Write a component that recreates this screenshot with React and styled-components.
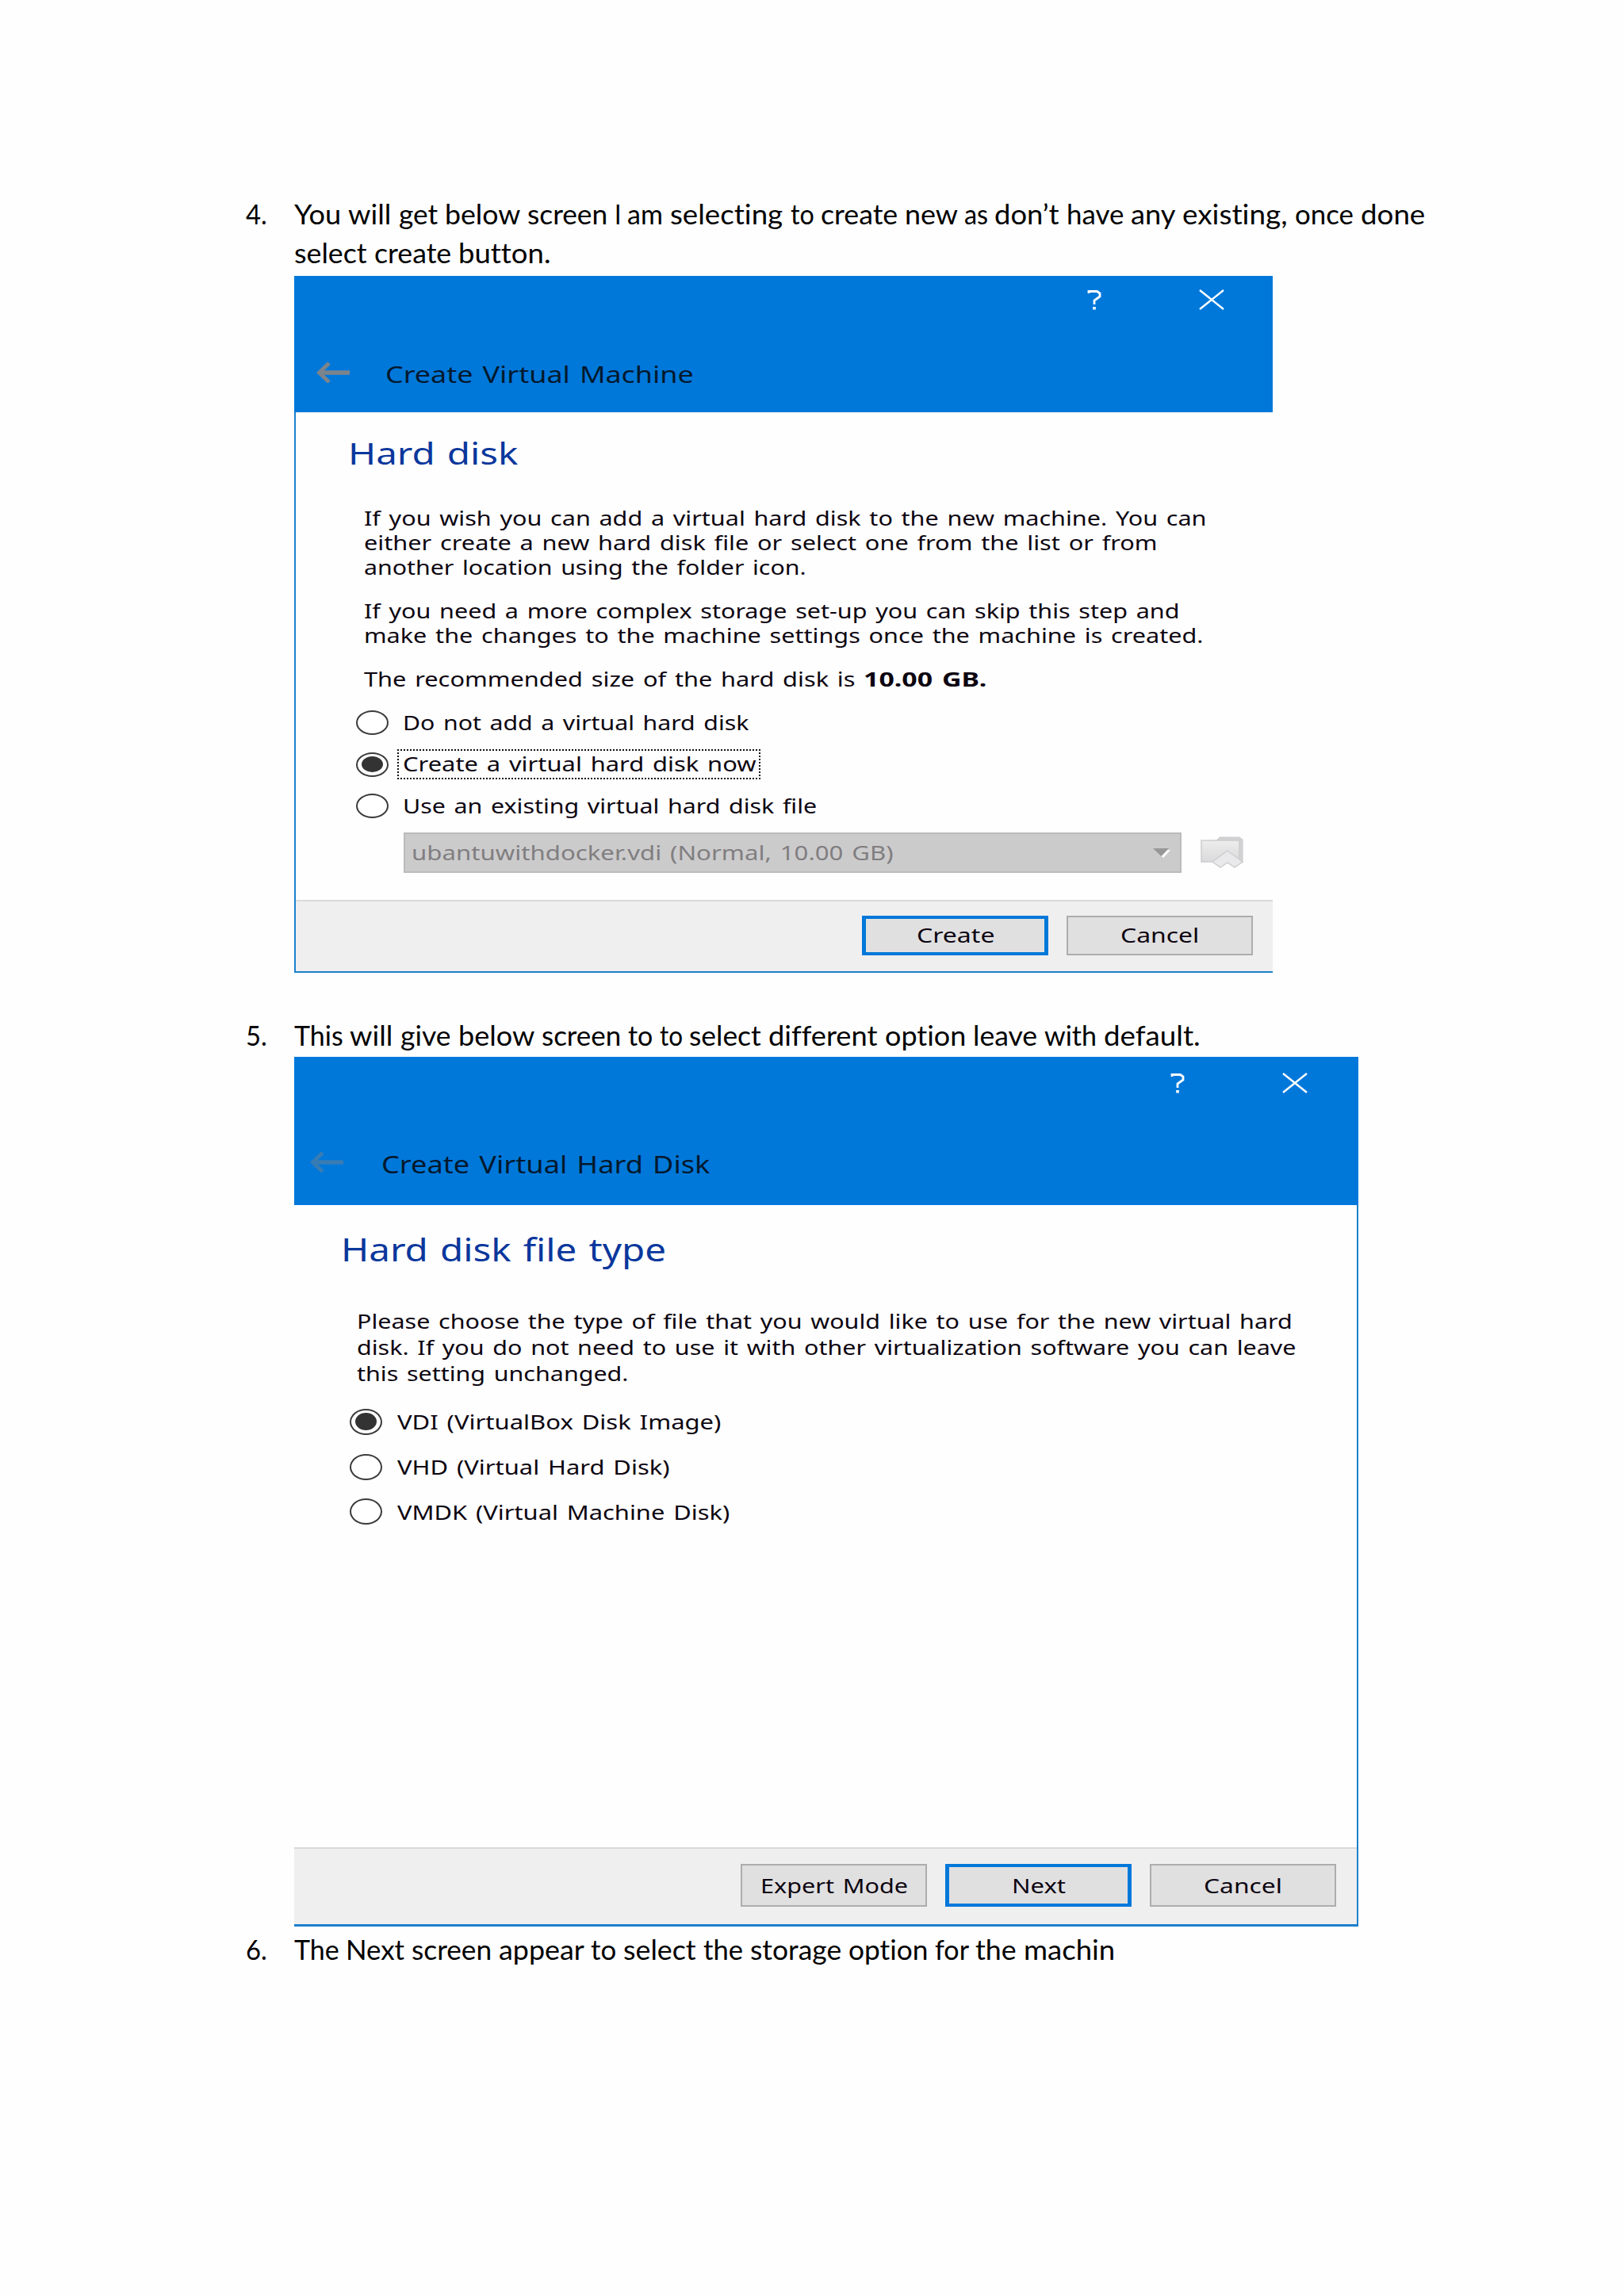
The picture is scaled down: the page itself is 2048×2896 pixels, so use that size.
import { useLayoutEffect, useRef, useState } from "react";
import styled, { createGlobalStyle } from "styled-components";

const GlobalStyle = createGlobalStyle`
  body {
    margin: 0;
    background: #fefefe;
  }
  * {
    box-sizing: border-box;
  }
`;

const Page = styled.ol`
  width: 2048px;
  height: 2896px;
  margin: 0;
  padding: 245px 0 0 310px;
  list-style: none;
  overflow: hidden;
  color: #000;
  font-family: Lato, Carlito, sans-serif;
  font-size: 34px;
  line-height: 49px;
  font-variant-ligatures: none;
`;

const Step = styled.li`
  display: grid;
  grid-template-columns: 61px 1fr;
  height: ${(p) => p.$height}px;
`;

const StepLine = styled.div`
  height: 49px;
  display: flex;
`;

const Dialog = styled.section`
  width: ${(p) => p.$width}px;
  margin-top: ${(p) => p.$top}px;
  background: #fefefe;
  border: 0 solid #1c80cc;
  border-width: ${(p) => p.$border};
  color: #0c0510;
  font-family: "Noto Sans", sans-serif;
  font-size: ${(p) => p.$size}px;
  word-spacing: 0.09em;
`;

const Header = styled.header`
  height: ${(p) => p.$height}px;
  margin: ${(p) => p.$margin};
  background: #0078da;
`;

const Controls = styled.div`
  height: ${(p) => p.$height}px;
  padding-right: ${(p) => p.$right}px;
  display: flex;
  justify-content: flex-end;
  align-items: center;
  gap: 123px;
  color: #fff;
`;

const TitleRow = styled.div`
  height: 40px;
  margin-top: ${(p) => p.$top}px;
  padding-left: ${(p) => p.$left}px;
  display: flex;
  align-items: center;
  gap: ${(p) => p.$gap}px;
`;

const Title = styled.div`
  padding-top: 3px;
  color: #04192e;
  font-size: ${(p) => p.$size}px;
  line-height: 40px;
`;

const Body = styled.div`
  height: ${(p) => p.$height}px;
  padding: ${(p) => p.$padding};
`;

const Heading = styled.h1`
  margin: 0;
  color: #0a379c;
  font-size: ${(p) => p.$size}px;
  line-height: ${(p) => p.$line}px;
  height: ${(p) => p.$line}px;
  font-weight: 400;
`;

const Paragraph = styled.div`
  margin: ${(p) => p.$top}px 0 0 ${(p) => p.$left}px;
  line-height: ${(p) => p.$line}px;
`;

const TextLine = styled.div`
  display: flex;
  height: ${(p) => p.$line}px;
`;

const RadioGroup = styled.div`
  margin: ${(p) => p.$top}px 0 0 ${(p) => p.$left}px;
  display: flex;
  flex-direction: column;
  gap: ${(p) => p.$gap}px;
`;

const RadioRow = styled.div`
  height: 38px;
  display: flex;
  align-items: center;
  line-height: 38px;
`;

const Radio = styled.span`
  width: 41px;
  height: ${(p) => p.$height}px;
  border: 2px solid #3b3b3d;
  border-radius: 50%;
  background: #fff;
  display: flex;
  align-items: center;
  justify-content: center;
`;

const Dot = styled.span`
  width: 27px;
  height: ${(p) => p.$height}px;
  border-radius: 50%;
  background: #333;
`;

const RadioLabel = styled.span`
  height: 38px;
  margin-left: ${(p) => p.$gap - 7}px;
  padding: 0 6px 0 7px;
  display: flex;
  outline: ${(p) => (p.$focused ? "2px dotted #111" : "none")};
  outline-offset: -2px;
`;

const DiskRow = styled.div`
  margin: 14px 0 0 70px;
  display: flex;
  align-items: center;
`;

const Select = styled.div`
  width: 981px;
  height: 51px;
  padding: 0 12px 0 8px;
  background: #cccbcc;
  border: 2px solid #bbb;
  color: #807e80;
  line-height: 47px;
  display: flex;
  justify-content: space-between;
  align-items: center;
`;

const FolderButton = styled.span`
  margin-left: 24px;
  display: flex;
`;

const Footer = styled.footer`
  height: ${(p) => p.$height}px;
  padding: ${(p) => p.$padding};
  background: #f0eff0;
  border-top: 2px solid #d9d9d9;
  display: flex;
  justify-content: flex-end;
  gap: 23px;
`;

const Button = styled.div`
  width: 235px;
  height: ${(p) => p.$height}px;
  background: #e1e0e1;
  border: solid ${(p) => (p.$primary ? "#0078d9" : "#adadad")};
  border-width: ${(p) => (p.$primary ? "4px 5px" : "2px")};
  display: flex;
  align-items: center;
  justify-content: center;
  line-height: 36px;
`;

const FitBox = styled.span`
  display: inline-block;
  width: ${(p) => p.$width}px;
  flex: none;
  white-space: pre;
`;

const FitInner = styled.span`
  display: inline-block;
  transform-origin: 0 50%;
`;

// stretches or condenses one run of text so it fills the given width
const Fit = ({ width, children }) => {
  const ref = useRef(null);
  const [scale, setScale] = useState(1);
  useLayoutEffect(() => {
    setScale(width / ref.current.offsetWidth);
  }, [width]);
  return (
    <FitBox $width={width}>
      <FitInner ref={ref} style={{ transform: `scaleX(${scale})` }}>
        {children}
      </FitInner>
    </FitBox>
  );
};

// one line of the document, spaced word by word
const Sentence = ({ words }) => (
  <StepLine>
    {words.map(([word, width], i) => (
      <Fit key={i} width={width}>
        {i < words.length - 1 ? `${word} ` : word}
      </Fit>
    ))}
  </StepLine>
);

const BackArrow = ({ color }) => (
  <svg width="42" height="26" viewBox="0 0 42 26" fill="none" stroke={color}>
    <path d="M3 13H42" strokeWidth="5.5" />
    <path d="M16 1L3.500 13L16 25" strokeWidth="5" />
  </svg>
);

const CloseIcon = () => (
  <svg width="32" height="26" viewBox="0 0 32 26" fill="none" stroke="currentColor" strokeWidth="2.4">
    <path d="M1 1L31 25M31 1L1 25" />
  </svg>
);

const HelpIcon = () => (
  <svg width="18" height="26" viewBox="0 0 18 26" fill="none" stroke="currentColor" strokeWidth="2.8">
    <path d="M2 5V2.5H12.5L16 5V9L9 14V19" />
    <path d="M9 22V25.5" strokeWidth="3.6" />
  </svg>
);

const SelectArrow = () => (
  <svg width="22" height="13" viewBox="0 0 22 13">
    <path d="M22 3L13 13L10 10L18 3Z" fill="#fff" />
    <path d="M0 1H20L10.500 11Z" fill="#989798" />
  </svg>
);

const FolderIcon = () => (
  <svg width="54" height="40" viewBox="0 0 54 40">
    <defs>
      <linearGradient id="folder" x1="0" y1="0" x2="0" y2="1">
        <stop offset="0" stopColor="#ededed" />
        <stop offset="1" stopColor="#dadadc" />
      </linearGradient>
    </defs>
    <path d="M20 5L24 1H49L53 4V33H20Z" fill="#d2d1d3" stroke="#cbcbcd" />
    <path d="M1 5H49V32H1Z" fill="url(#folder)" stroke="#cdcdcf" strokeWidth="1.500" />
    <path d="M34 18L53 32L43 39L34 33L25 39L15 32Z" fill="#e9e8ea" stroke="#cfced0" strokeWidth="1.500" />
  </svg>
);

const Lines = ({ lines, line }) =>
  lines.map(([text, width]) => (
    <TextLine key={text} $line={line}>
      <Fit width={width}>{text}</Fit>
    </TextLine>
  ));

const Option = ({ text, width, checked, focused, height, gap }) => (
  <RadioRow>
    <Radio $height={height}>{checked && <Dot $height={height - 11} />}</Radio>
    <RadioLabel $focused={focused} $gap={gap}>
      <Fit width={width}>{text}</Fit>
    </RadioLabel>
  </RadioRow>
);

const MachineDialog = () => (
  <Dialog $width={1234} $top={5} $border="0 0 2px 2px" $size={24.5}>
    <Header $height={172} $margin="0 0 0 -2px">
      <Controls $height={60} $right={61}>
        <HelpIcon />
        <CloseIcon />
      </Controls>
      <TitleRow $top={42} $left={28} $gap={45}>
        <BackArrow color="#7c848b" />
        <Title $size={29}>
          <Fit width={389}>Create Virtual Machine</Fit>
        </Title>
      </TitleRow>
    </Header>
    <Body $height={615} $padding="26px 0 0 66px">
      <Heading $size={38} $line={50}>
        <Fit width={215}>Hard disk</Fit>
      </Heading>
      <Paragraph $top={42} $left={20} $line={31.2}>
        <Lines
          line={31.2}
          lines={[
            ["If you wish you can add a virtual hard disk to the new machine. You can", 1063],
            ["either create a new hard disk file or select one from the list or from", 1000],
            ["another location using the folder icon.", 558],
          ]}
        />
      </Paragraph>
      <Paragraph $top={23.2} $left={20} $line={31.2}>
        <Lines
          line={31.2}
          lines={[
            ["If you need a more complex storage set-up you can skip this step and", 1029],
            ["make the changes to the machine settings once the machine is created.", 1058],
          ]}
        />
      </Paragraph>
      <Paragraph $top={23.6} $left={20} $line={31.2}>
        <TextLine $line={31.2}>
          <Fit width={630}>The recommended size of the hard disk is </Fit>
          <Fit width={155}>
            <b>10.00 GB.</b>
          </Fit>
        </TextLine>
      </Paragraph>
      <RadioGroup $top={21} $left={10} $gap={14.5}>
        <Option text="Do not add a virtual hard disk" width={436} height={31} gap={18} />
        <Option text="Create a virtual hard disk now" width={445} height={31} gap={18} checked focused />
        <Option text="Use an existing virtual hard disk file" width={522} height={31} gap={18} />
      </RadioGroup>
      <DiskRow>
        <Select>
          <Fit width={608}>ubantuwithdocker.vdi (Normal, 10.00 GB)</Fit>
          <SelectArrow />
        </Select>
        <FolderButton>
          <FolderIcon />
        </FolderButton>
      </DiskRow>
    </Body>
    <Footer $height={90} $padding="18px 25px 0 0">
      <Button $height={50} $primary>
        <Fit width={98}>Create</Fit>
      </Button>
      <Button $height={50}>
        <Fit width={99}>Cancel</Fit>
      </Button>
    </Footer>
  </Dialog>
);

const HardDiskDialog = () => (
  <Dialog $width={1342} $top={3} $border="0 2px 3px 0" $size={26}>
    <Header $height={187} $margin="0 -2px 0 0">
      <Controls $height={66} $right={64}>
        <HelpIcon />
        <CloseIcon />
      </Controls>
      <TitleRow $top={47} $left={20} $gap={48}>
        <BackArrow color="#377cb4" />
        <Title $size={31}>
          <Fit width={414}>Create Virtual Hard Disk</Fit>
        </Title>
      </TitleRow>
    </Header>
    <Body $height={810} $padding="29px 0 0 59px">
      <Heading $size={40} $line={54}>
        <Fit width={410}>Hard disk file type</Fit>
      </Heading>
      <Paragraph $top={46.7} $left={20} $line={33.4}>
        <Lines
          line={33.4}
          lines={[
            ["Please choose the type of file that you would like to use for the new virtual hard", 1180],
            ["disk. If you do not need to use it with other virtualization software you can leave", 1184],
            ["this setting unchanged.", 342],
          ]}
        />
      </Paragraph>
      <RadioGroup $top={24.5} $left={11} $gap={18.8}>
        <Option text="VDI (VirtualBox Disk Image)" width={408} height={33} gap={19} checked />
        <Option text="VHD (Virtual Hard Disk)" width={344} height={33} gap={19} />
        <Option text="VMDK (Virtual Machine Disk)" width={419} height={33} gap={19} />
      </RadioGroup>
    </Body>
    <Footer $height={97} $padding="19px 26px 0 0">
      <Button $height={54}>
        <Fit width={186}>Expert Mode</Fit>
      </Button>
      <Button $height={54} $primary>
        <Fit width={68}>Next</Fit>
      </Button>
      <Button $height={54}>
        <Fit width={99}>Cancel</Fit>
      </Button>
    </Footer>
  </Dialog>
);

const stepFour = [
  ["You", 68],
  ["will", 64],
  ["get", 58],
  ["below", 104],
  ["screen", 110],
  ["I", 16],
  ["am", 54],
  ["selecting", 152],
  ["to", 38],
  ["create", 106],
  ["new", 75],
  ["as", 38],
  ["don’t", 91],
  ["have", 81],
  ["any", 65],
  ["existing,", 142],
  ["once", 83],
  ["done", 81],
];

const stepFourEnd = [
  ["select", 101],
  ["create", 106],
  ["button.", 117],
];

const stepFive = [
  ["This", 70],
  ["will", 64],
  ["give", 73],
  ["below", 105],
  ["screen", 109],
  ["to", 40],
  ["to", 37],
  ["select", 100],
  ["different", 147],
  ["option", 111],
  ["leave", 90],
  ["with", 75],
  ["default.", 122],
];

const stepSix = [
  ["The", 65],
  ["Next", 83],
  ["screen", 110],
  ["appear", 116],
  ["to", 41],
  ["select", 101],
  ["the", 59],
  ["storage", 124],
  ["option", 109],
  ["for", 51],
  ["the", 61],
  ["machin", 115],
];

const App = () => (
  <>
    <GlobalStyle />
    <Page>
      <Step $height={1036}>
        <Fit width={27}>4.</Fit>
        <div>
          <Sentence words={stepFour} />
          <Sentence words={stepFourEnd} />
          <MachineDialog />
        </div>
      </Step>
      <Step $height={1153}>
        <Fit width={27}>5.</Fit>
        <div>
          <Sentence words={stepFive} />
          <HardDiskDialog />
        </div>
      </Step>
      <Step $height={49}>
        <Fit width={27}>6.</Fit>
        <Sentence words={stepSix} />
      </Step>
    </Page>
  </>
);

export default App;
